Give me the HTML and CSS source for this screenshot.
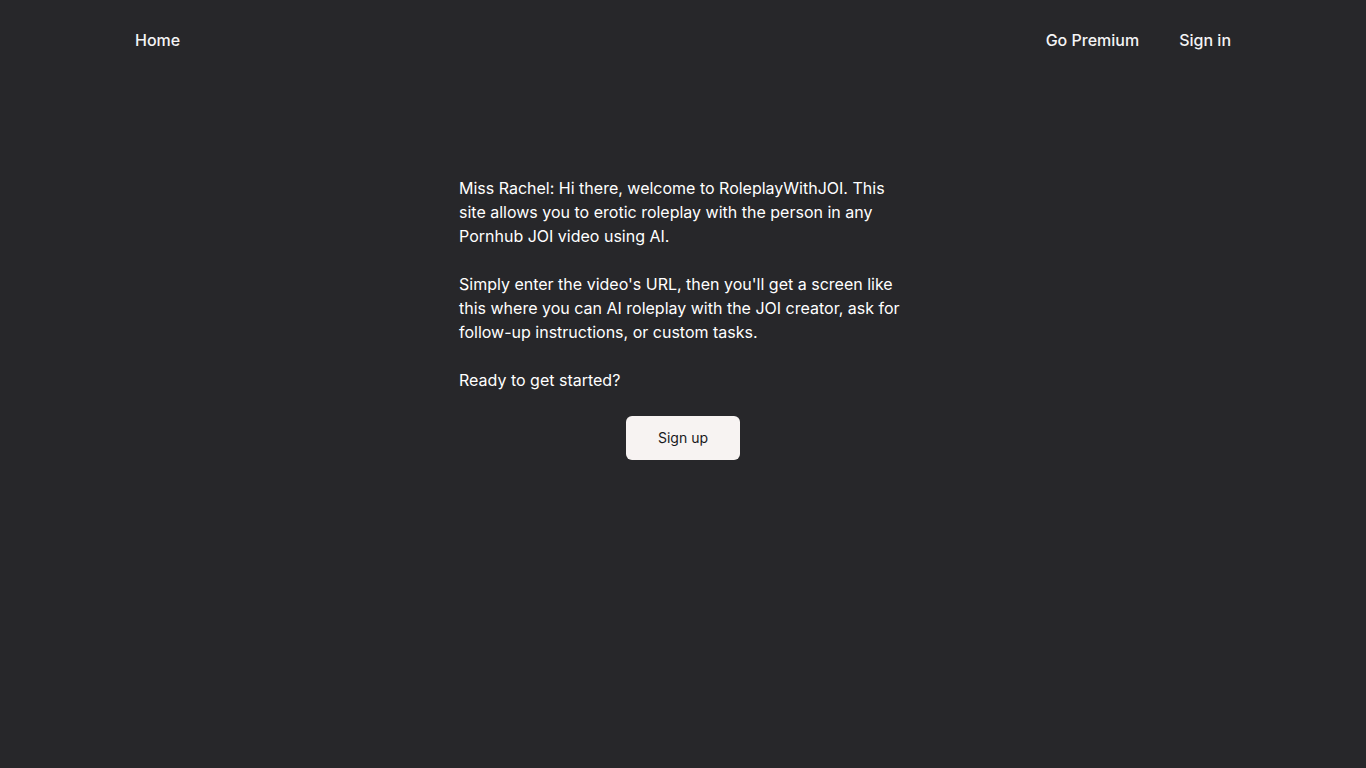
FILE: index.html
```html
<!DOCTYPE html>
<html lang="en">
  <head>
    <meta charset="UTF-8" />
    <meta name="viewport" content="width=device-width, initial-scale=1.0" />
    <title>RoleplayWithJOI</title>
    <link rel="stylesheet" href="styles.css">
  </head>
  <body>
    <header class="nav">
      <a href="#" class="nav-link">Home</a>
      <div class="nav-right">
        <a href="#" class="nav-link">Go Premium</a>
        <a href="#" class="nav-link">Sign in</a>
      </div>
    </header>

    <main class="intro">
      <p>Miss Rachel: Hi there, welcome to RoleplayWithJOI. This site allows you to erotic roleplay with the person in any Pornhub JOI video using AI.</p>
      <p>Simply enter the video's URL, then you'll get a screen like this where you can AI roleplay with the JOI creator, ask for follow-up instructions, or custom tasks.</p>
      <p>Ready to get started?</p>
      <div class="actions">
        <button type="button" class="signup">Sign up</button>
      </div>
    </main>
  </body>
</html>
```

FILE: styles.css
```css
html, body {
  margin: 0;
  padding: 0;
  background-color: #27272a;
  min-height: 100%;
}
body {
  font-family: Inter, "Noto Sans", sans-serif;
  color: #ffffff;
  min-height: 768px;
}
.nav {
  display: flex;
  justify-content: space-between;
  align-items: center;
  height: 80px;
  padding: 0 135px;
}
.nav-right {
  display: flex;
  gap: 40px;
}
.nav-link {
  color: #f4f4f5;
  text-decoration: none;
  font-size: 16px;
  font-weight: 500;
  line-height: 24px;
}
.intro {
  max-width: 448px;
  margin: 96px auto 0;
  font-size: 16px;
  line-height: 24px;
}
.intro p {
  margin: 0 0 24px;
}
.actions {
  display: flex;
  justify-content: center;
}
.signup {
  background-color: #f7f3f2;
  color: #18181b;
  border: none;
  border-radius: 6px;
  padding: 12px 32px;
  font-family: inherit;
  font-size: 14px;
  line-height: 20px;
  cursor: pointer;
}
```
